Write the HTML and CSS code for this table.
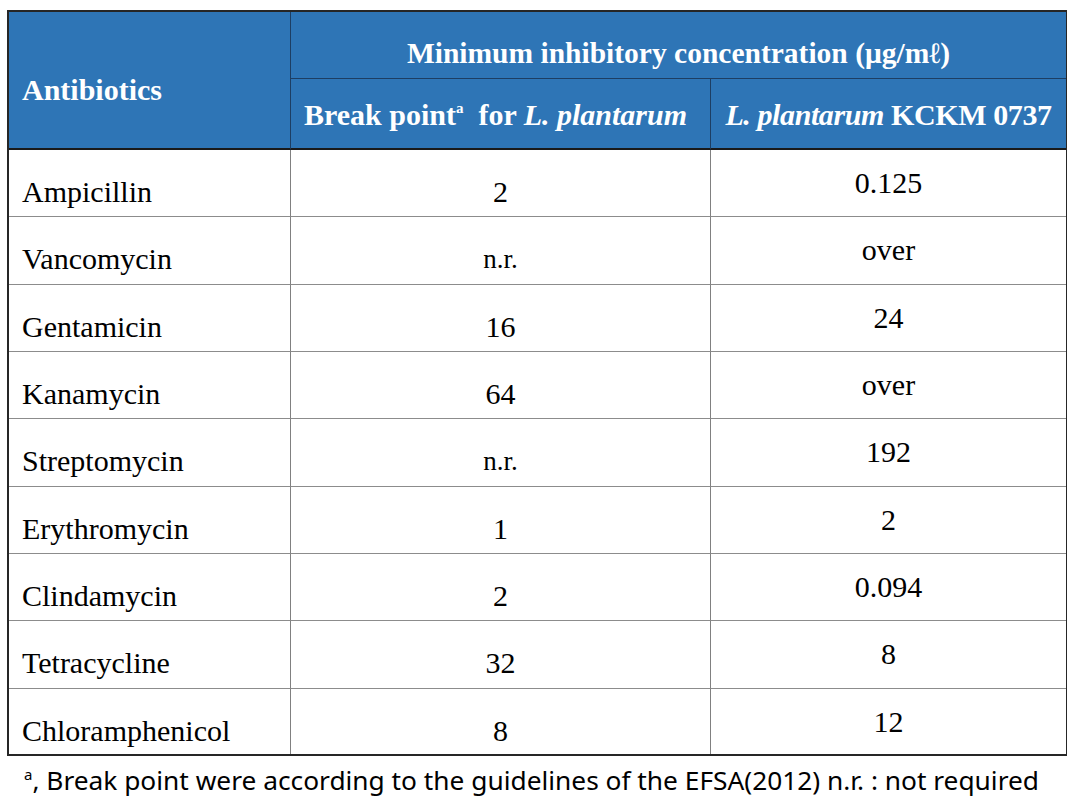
FILE: index.html
```html
<!DOCTYPE html>
<html lang="en">
<head>
<meta charset="utf-8">
<title>Minimum inhibitory concentration</title>
<link rel="stylesheet" href="styles.css">
</head>
<body>
<div class="page">
  <table class="mic">
    <colgroup>
      <col class="c1"><col class="c2"><col class="c3">
    </colgroup>
    <thead>
      <tr class="h1">
        <th class="ab" rowspan="2">Antibiotics</th>
        <th class="span" colspan="2">Minimum inhibitory concentration (μg/mℓ)</th>
      </tr>
      <tr class="h2">
        <th class="bp">Break point<sup>a</sup>&nbsp; for <i>L. plantarum</i></th>
        <th class="st"><i>L. plantarum</i> KCKM 0737</th>
      </tr>
    </thead>
    <tbody>
      <tr><td class="name">Ampicillin</td><td class="bpv">2</td><td class="val">0.125</td></tr>
      <tr class="tall"><td class="name">Vancomycin</td><td class="bpv nr">n.r.</td><td class="val">over</td></tr>
      <tr><td class="name">Gentamicin</td><td class="bpv">16</td><td class="val">24</td></tr>
      <tr><td class="name">Kanamycin</td><td class="bpv">64</td><td class="val">over</td></tr>
      <tr class="tall"><td class="name">Streptomycin</td><td class="bpv nr">n.r.</td><td class="val">192</td></tr>
      <tr><td class="name">Erythromycin</td><td class="bpv">1</td><td class="val">2</td></tr>
      <tr><td class="name">Clindamycin</td><td class="bpv">2</td><td class="val">0.094</td></tr>
      <tr class="tall"><td class="name">Tetracycline</td><td class="bpv">32</td><td class="val">8</td></tr>
      <tr class="last"><td class="name">Chloramphenicol</td><td class="bpv">8</td><td class="val">12</td></tr>
    </tbody>
  </table>
  <p class="note"><sup>a</sup>, Break point were according to the guidelines of the EFSA(2012) n.r. : not required</p>
</div>
</body>
</html>
```

FILE: styles.css
```css
html, body {
  margin: 0;
  padding: 0;
  background: #ffffff;
}

.page {
  padding: 10px 0 0 7px;
}

.mic {
  width: 1060px;
  border-collapse: separate;
  border-spacing: 0;
  table-layout: fixed;
  border-top: 2px solid #262626;
  border-left: 2px solid #262626;
  border-bottom: 2px solid #262626;
  border-right: 1px solid #262626;
  font-family: "Liberation Serif", "Times New Roman", serif;
  font-size: 30px;
  line-height: 34px;
  color: #000;
}

.c1 { width: 282px; }
.c2 { width: 420px; }
.c3 { width: 355px; }

.mic th,
.mic td {
  box-sizing: border-box;
  padding: 0;
  vertical-align: top;
}

.mic th {
  background: #2e75b6;
  color: #ffffff;
  font-weight: bold;
  white-space: nowrap;
}

.mic th i { font-style: italic; }

.h1 th { height: 67px; }
.h2 th { height: 71px; }

.ab {
  text-align: left;
  padding: 61px 0 0 13px !important;
  border-right: 1px solid #1d3e63;
  border-bottom: 2px solid #1a1a1a;
}

.span {
  text-align: center;
  font-size: 29.5px;
  padding-top: 24px !important;
  border-bottom: 1px solid #1d3e63;
}

.bp {
  text-align: center;
  padding: 19px 10px 0 0 !important;
  border-right: 1px solid #1d3e63;
  border-bottom: 2px solid #1a1a1a;
}

.st {
  text-align: center;
  letter-spacing: -0.4px;
  padding-top: 19px !important;
  border-bottom: 2px solid #1a1a1a;
}

.bp sup {
  font-size: 15px;
  line-height: 0;
  vertical-align: 12px;
}

.mic td {
  height: 67px;
  border-bottom: 1px solid #8c8c8c;
}

.mic tr.tall td { height: 68px; }

.mic tr.last td { border-bottom: none; height: 65px; }

.name {
  text-align: left;
  padding: 25px 0 0 13px !important;
  border-right: 1px solid #808080;
}

.bpv {
  text-align: center;
  padding-top: 25px !important;
  border-right: 1px solid #808080;
}

.nr { font-size: 27px; }

.val {
  text-align: center;
  padding-top: 16px !important;
}

.note {
  margin: 7px 0 0 0;
  padding-left: 17px;
  font-family: "Noto Sans", "Open Sans", sans-serif;
  font-size: 26.3px;
  line-height: 34px;
  color: #000;
  white-space: nowrap;
}

.note sup {
  font-size: 15px;
  line-height: 0;
  vertical-align: 10px;
}
```
